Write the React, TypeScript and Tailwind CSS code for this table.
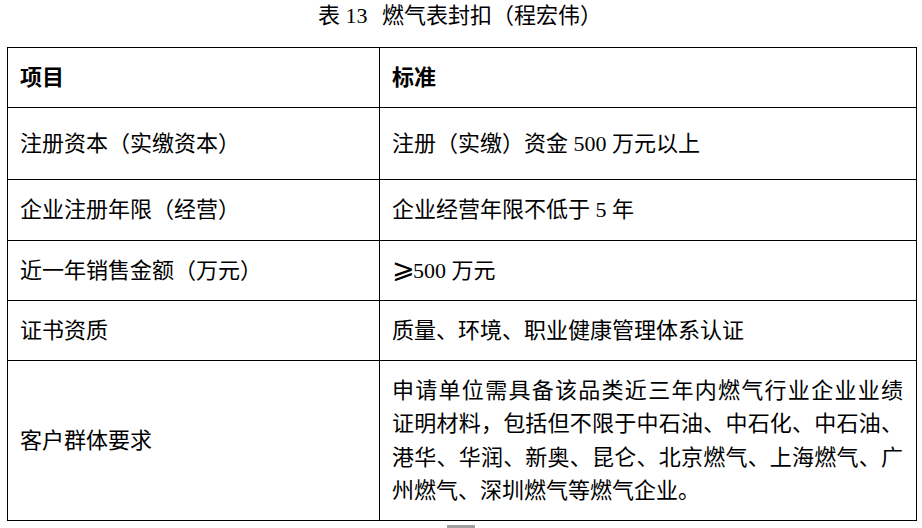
import React from "react"

const font = { fontFamily: '"Liberation Serif", "Noto Sans CJK SC", serif' }

const rows: { label: string; value: React.ReactNode; h: string }[] = [
  { label: "注册资本（实缴资本）", value: "注册（实缴）资金 500 万元以上", h: "h-[72px]" },
  { label: "企业注册年限（经营）", value: "企业经营年限不低于 5 年", h: "h-[61px]" },
  {
    label: "近一年销售金额（万元）",
    value: (
      <>
        <span className="inline-block w-[21px] leading-none [font-family:'DejaVu_Sans',sans-serif] text-[27px]">⩾</span>
        500 万元
      </>
    ),
    h: "h-[60px]",
  },
  { label: "证书资质", value: "质量、环境、职业健康管理体系认证", h: "h-[60px]" },
]

const customerLines = [
  "申请单位需具备该品类近三年内燃气行业企业业绩",
  "证明材料，包括但不限于中石油、中石化、中石油、",
  "港华、华润、新奥、昆仑、北京燃气、上海燃气、广",
  "州燃气、深圳燃气等燃气企业。",
]

export default function App() {
  return (
    <div className="w-[922px] h-[528px] bg-white text-black overflow-hidden relative" style={font}>
      <div className="h-[47px] text-center text-[22px] leading-[32px] pr-[2px]">
        表 <span className="mr-[9px]">13</span> 燃气表封扣（程宏伟）
      </div>

      <div className="px-[7px]">
        <table className="w-[910px] border-collapse text-[22px] leading-[32px]">
          <colgroup>
            <col className="w-[372px]" />
            <col />
          </colgroup>
          <tbody>
            <tr className="h-[60px]">
              <td className="border border-black pl-[12px] font-bold align-middle">项目</td>
              <td className="border border-black pl-[12px] font-bold align-middle">标准</td>
            </tr>
            {rows.map((r) => (
              <tr key={r.label} className={r.h}>
                <td className="border border-black pl-[12px] align-middle">{r.label}</td>
                <td className="border border-black pl-[12px] align-middle">{r.value}</td>
              </tr>
            ))}
            <tr className="h-[160px]">
              <td className="border border-black pl-[12px] align-middle">客户群体要求</td>
              <td className="border border-black pl-[12px] align-middle">
                <div className="w-[511px] leading-[33.3px]">
                  {customerLines.map((line, i) => (
                    <div
                      key={i}
                      className={
                        i < customerLines.length - 1
                          ? "text-justify [text-align-last:justify] whitespace-nowrap"
                          : "whitespace-nowrap"
                      }
                    >
                      {line}
                    </div>
                  ))}
                </div>
              </td>
            </tr>
          </tbody>
        </table>
      </div>

      {/* bit of the next page peeking in */}
      <div className="absolute left-[447px] top-[525px] w-[28px] h-[3px] bg-[#a0a0a0]" />
    </div>
  )
}
